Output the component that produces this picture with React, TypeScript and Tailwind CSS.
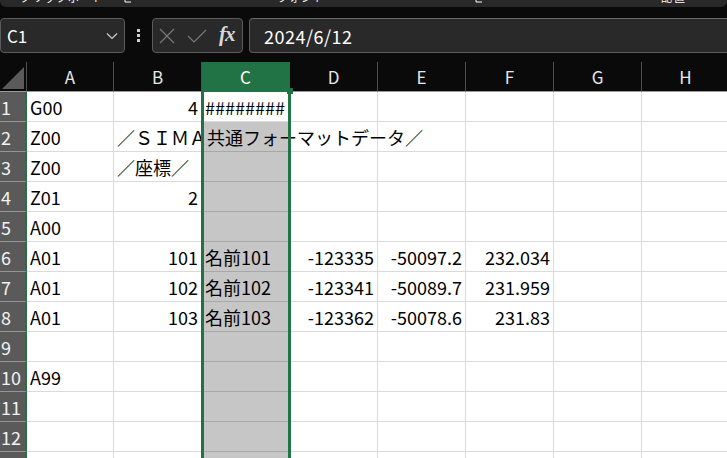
import React from "react";

const FONT = { fontFamily: '"Noto Sans CJK JP", "Noto Sans", sans-serif' };

type Cell = { t: string; r?: boolean; over?: boolean };

const data: Cell[][] = [
  [{ t: "G00" }, { t: "4", r: true }, { t: "########" }],
  [{ t: "Z00" }, { t: "／ＳＩＭＡ共通フォーマットデータ／", over: true }],
  [{ t: "Z00" }, { t: "／座標／" }],
  [{ t: "Z01" }, { t: "2", r: true }],
  [{ t: "A00" }],
  [
    { t: "A01" },
    { t: "101", r: true },
    { t: "名前101" },
    { t: "-123335", r: true },
    { t: "-50097.2", r: true },
    { t: "232.034", r: true },
  ],
  [
    { t: "A01" },
    { t: "102", r: true },
    { t: "名前102" },
    { t: "-123341", r: true },
    { t: "-50089.7", r: true },
    { t: "231.959", r: true },
  ],
  [
    { t: "A01" },
    { t: "103", r: true },
    { t: "名前103" },
    { t: "-123362", r: true },
    { t: "-50078.6", r: true },
    { t: "231.83", r: true },
  ],
  [],
  [{ t: "A99" }],
  [],
  [],
  [],
];

const cols = ["A", "B", "C", "D", "E", "F", "G", "H"];

function Launcher() {
  return (
    <svg width="8" height="8" viewBox="0 0 8 8" className="-mt-[5px]">
      <path d="M1 0v7h6" stroke="#fff" strokeWidth="1" fill="none" />
    </svg>
  );
}

export default function App() {
  return (
    <div className="w-[727px] h-[458px] overflow-hidden bg-[#0a0a0a] text-black" style={FONT}>
      {/* ribbon remnant */}
      <div className="h-[7px] bg-[#292929] rounded-b-[6px] overflow-hidden flex items-start text-[11px] leading-[12px] text-white">
        <span className="-mt-[9px] ml-[20px] tracking-[1px]">クリップボード</span>
        <span className="ml-[20px]"><Launcher /></span>
        <span className="-mt-[9px] ml-[145px] tracking-[1px]">フォント</span>
        <span className="ml-[150px]"><Launcher /></span>
        <span className="-mt-[9px] ml-[178px] tracking-[2px]">配置</span>
      </div>

      {/* formula bar */}
      <div className="mt-[11px] h-[35px] flex items-stretch">
        <div className="w-[125px] rounded-[4px] border border-[#5c5c5c] bg-[#292929] flex items-center justify-between pl-[6px] pr-[6px]">
          <span className="text-[17px] leading-none text-white">C1</span>
          <svg width="12" height="8" viewBox="0 0 12 8">
            <path d="M1 1.5l5 5 5-5" stroke="#d0d0d0" strokeWidth="1.2" fill="none" />
          </svg>
        </div>
        <div className="w-[27px] flex flex-col items-center justify-center gap-[2px]">
          <span className="w-[3px] h-[3px] bg-[#d0d0d0]" />
          <span className="w-[3px] h-[3px] bg-[#d0d0d0]" />
          <span className="w-[3px] h-[3px] bg-[#d0d0d0]" />
        </div>
        <div className="w-[91px] rounded-[4px] border border-[#5c5c5c] bg-[#292929] flex items-center pl-[6px] gap-[12px]">
          <svg width="16" height="16" viewBox="0 0 16 16">
            <path d="M1 1l14 14M15 1L1 15" stroke="#7a7a7a" strokeWidth="1.2" fill="none" />
          </svg>
          <svg width="20" height="14" viewBox="0 0 20 14">
            <path d="M1 7l6 6L19 1" stroke="#7a7a7a" strokeWidth="1.2" fill="none" />
          </svg>
          <span
            className="text-[21px] leading-none text-[#d8d8d8] italic font-bold -mt-[2px] tracking-[-1px]"
            style={{ fontFamily: '"Liberation Serif", "DejaVu Serif", serif' }}
          >
            fx
          </span>
        </div>
        <div className="flex-1 ml-[6px] -mr-[10px] rounded-[4px] border border-[#5c5c5c] border-t-[#6a6a6a] bg-[#292929] flex items-center pl-[14px]">
          <span className="text-[18px] leading-none text-white tracking-[0.5px]">2024/6/12</span>
        </div>
      </div>

      {/* grid */}
      <div className="relative mt-[9px]">
        {/* header row */}
        <div className="flex h-[30px]">
          <div className="w-[27px] shrink-0 border-r border-[#4f4f4f] border-b border-b-[#9a9a9a] flex items-end justify-end pr-[2px] pb-[2px]">
            <svg width="22" height="22" viewBox="0 0 22 22">
              <path d="M22 0V22H0Z" fill="#5a5a5a" />
            </svg>
          </div>
          {cols.map((c, i) => (
            <div
              key={c}
              className={
                "shrink-0 flex items-center justify-center text-[17px] leading-none border-r border-b " +
                (i === 0 ? "w-[87px] " : "w-[88px] ") +
                (c === "C"
                  ? "bg-[#217346] text-white border-r-[#217346] border-b-[#217346]"
                  : "text-[#e8e8e8] border-r-[#4f4f4f] border-b-[#9a9a9a]")
              }
            >
              {c}
            </div>
          ))}
        </div>

        {data.map((row, ri) => (
          <div key={ri} className="flex h-[30px]">
            <div className="w-[27px] shrink-0 bg-[#5a5a5a] border-b border-b-[#959595] border-r-2 border-r-[#217346] flex items-center pl-[1px] text-[18px] leading-none text-[#f2f2f2]">
              {ri + 1}
            </div>
            {cols.map((c, ci) => {
              const cell = row[ci];
              const isC = ci === 2;
              const active = isC && ri === 0;
              return (
                <div
                  key={c}
                  className={
                    "shrink-0 flex items-center border-r border-b text-[18px] leading-none whitespace-nowrap " +
                    (ci === 0 ? "w-[87px] " : "w-[88px] ") +
                    (isC && !active
                      ? "bg-[#c6c6c6] border-[#a8a8a8] "
                      : "bg-white border-[#dadada] ") +
                    (cell?.r ? "justify-end pr-[3px] " : "justify-start pl-[3px] ") +
                    (cell?.over ? "overflow-visible" : "overflow-hidden")
                  }
                >
                  {cell ? (
                    <span className={cell.over ? "relative z-10" : ""}>{cell.t}</span>
                  ) : null}
                </div>
              );
            })}
          </div>
        ))}

        {/* selection border for column C */}
        <div className="absolute left-[201px] top-[29px] w-[90px] h-[420px] border-x-[3px] border-[#217346] z-20 pointer-events-none" />
        <div className="absolute left-[287px] top-[26px] w-[6px] h-[6px] bg-[#217346] z-30" />
      </div>
    </div>
  );
}
